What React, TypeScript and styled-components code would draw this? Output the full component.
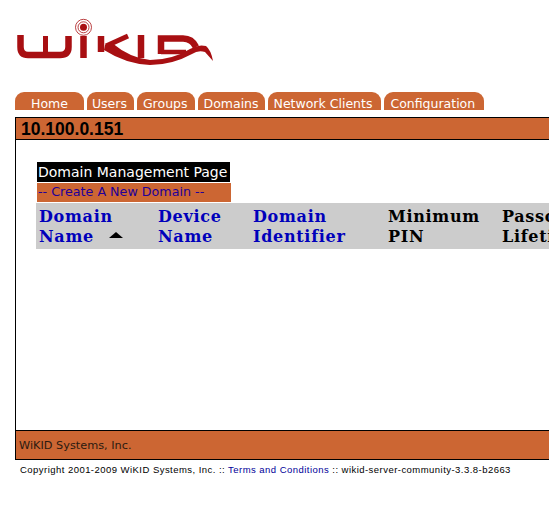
import * as React from "react";
import styled, { createGlobalStyle } from "styled-components";

const GlobalStyle = createGlobalStyle`
    html, body {
        margin: 0;
        padding: 0;
        background: white;
        overflow: hidden;
    }
`;

const Page = styled.div`
    width: 549px;
    height: 516px;
    overflow: hidden;
    padding-top: 18px;
    box-sizing: border-box;
`;

const LogoHolder = styled.div`
    height: 74px;
    padding-left: 15px;
`;

const TabBar = styled.nav`
    display: flex;
    gap: 3px;
    height: 18px;
    padding-left: 15px;
    margin-bottom: 7px;
`;

const Tab = styled.a<{ $left: number; $right: number }>`
    display: block;
    height: 18px;
    padding: 0 ${(p) => p.$right}px 0 ${(p) => p.$left}px;
    background: #cc6633;
    border-radius: 9px 9px 0 0;
    color: white;
    font: 12.5px/24px "DejaVu Sans", sans-serif;
    white-space: nowrap;
`;

const Frame = styled.div`
    width: 700px;
    margin-left: 15px;
    border: 1px solid black;
    box-sizing: border-box;
`;

const TitleBar = styled.div`
    height: 21px;
    padding-left: 5px;
    background: #cc6633;
    border-bottom: 1px solid black;
    color: black;
    font: bold 17.5px/22px "Liberation Sans", sans-serif;
`;

const Content = styled.div`
    height: 290px;
    padding: 22px 0 0 21px;
    box-sizing: border-box;
`;

const PageHeading = styled.div`
    width: 193px;
    height: 20px;
    padding-left: 1px;
    box-sizing: border-box;
    background: black;
    color: white;
    font: 14px/20px "DejaVu Sans", sans-serif;
    white-space: nowrap;
`;

const CreateLink = styled.a`
    display: block;
    width: 194px;
    height: 19px;
    margin-top: 1px;
    padding-left: 1px;
    box-sizing: border-box;
    background: #cc6633;
    color: #220099;
    font: 12.7px/18px "DejaVu Sans", sans-serif;
    white-space: nowrap;
`;

const HeaderRow = styled.div`
    display: grid;
    grid-template-columns: 119px 95px 135px 114px 130px;
    height: 46px;
    margin: 1px 0 0 -1px;
    padding: 4px 0 0 3px;
    box-sizing: border-box;
    background: #cccccc;
`;

const HeaderCell = styled.div<{ $link?: boolean }>`
    color: ${(p) => (p.$link ? "#0000bb" : "black")};
    font: bold 16px/20px "DejaVu Serif", serif;
    letter-spacing: 0.7px;
`;

const SortArrow = styled.span`
    display: inline-block;
    width: 0;
    height: 0;
    margin: 0 0 4px 15px;
    border-left: 7px solid transparent;
    border-right: 7px solid transparent;
    border-bottom: 6px solid black;
`;

const Footer = styled.div`
    height: 28px;
    padding-left: 3px;
    background: #cc6633;
    border-top: 1px solid black;
    color: #2b1a10;
    font: 11.3px/29px "DejaVu Sans", sans-serif;
`;

const Copyright = styled.div`
    padding: 4px 0 0 20px;
    color: black;
    font: 9.5px/12px "Liberation Sans", sans-serif;
    letter-spacing: 0.46px;
    white-space: nowrap;
`;

const TermsLink = styled.a`
    color: #000099;
`;

const Logo = () => (
    <svg width="200" height="50" viewBox="15 18 200 50" fill="none" stroke="#a80f12">
        <path strokeWidth="6.5" d="M20.5 35 V47 Q20.5 55 28 55 H60 Q68.5 55 68.5 47 V36" />
        <path strokeWidth="5" d="M45.5 36 V55" />
        <path strokeWidth="6.5" d="M83.5 36 V58" />
        <circle cx="83.5" cy="27.3" r="3.5" fill="#a80f12" stroke="none" />
        <circle cx="83.5" cy="27.3" r="5.5" strokeWidth="0.8" />
        <circle cx="83.5" cy="27.3" r="8" strokeWidth="0.8" />
        <path strokeWidth="6.5" d="M101 36 V52" />
        <path strokeWidth="5" d="M128 36 L106 46" />
        <path strokeWidth="6.5" d="M141 35 V58" />
        <path strokeWidth="6.5" d="M161 54 V38.5 H183 Q192 38.5 196 47" />
        <path strokeWidth="4.5" d="M161 52 H186" />
        <path fill="#a80f12" stroke="none" d="M105 45 L112 43 Q130 58 150 60 Q172 60 190 49 Q198 44 206 46 Q211 50 213 61 L205 52 Q198 50 192 54 Q172 65 150 65 Q126 64 104 50 Z" />
    </svg>
);

const columns = [
    { top: "Domain", bottom: "Name", link: true, sorted: true },
    { top: "Device", bottom: "Name", link: true },
    { top: "Domain", bottom: "Identifier", link: true },
    { top: "Minimum", bottom: "PIN" },
    { top: "Passcode", bottom: "Lifetime" },
];

export default function App() {
    return (
        <Page>
            <GlobalStyle />
            <LogoHolder>
                <Logo />
            </LogoHolder>
            <TabBar>
                <Tab $left={16} $right={16}>Home</Tab>
                <Tab $left={5} $right={7}>Users</Tab>
                <Tab $left={6} $right={7}>Groups</Tab>
                <Tab $left={6} $right={6}>Domains</Tab>
                <Tab $left={6} $right={9}>Network Clients</Tab>
                <Tab $left={6} $right={9}>Configuration</Tab>
            </TabBar>
            <Frame>
                <TitleBar>10.100.0.151</TitleBar>
                <Content>
                    <PageHeading>Domain Management Page</PageHeading>
                    <CreateLink>-- Create A New Domain --</CreateLink>
                    <HeaderRow>
                        {columns.map((col) => (
                            <HeaderCell key={col.top + col.bottom} $link={col.link}>
                                {col.top}
                                <br />
                                {col.bottom}
                                {col.sorted && <SortArrow />}
                            </HeaderCell>
                        ))}
                    </HeaderRow>
                </Content>
                <Footer>WiKID Systems, Inc.</Footer>
            </Frame>
            <Copyright>
                Copyright 2001-2009 WiKID Systems, Inc. :: <TermsLink>Terms and Conditions</TermsLink> :: wikid-server-community-3.3.8-b2663
            </Copyright>
        </Page>
    );
}
